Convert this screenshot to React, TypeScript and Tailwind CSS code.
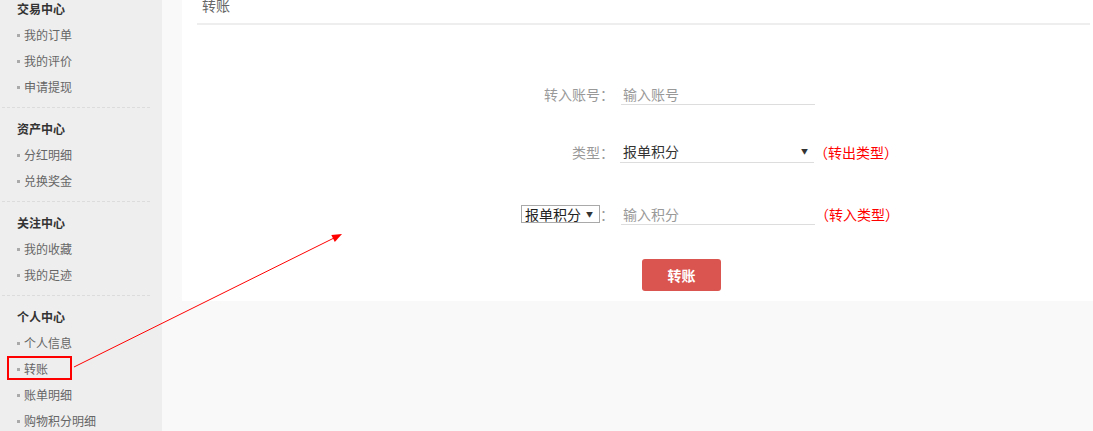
const sections = [
  { title: '交易中心', items: ['我的订单', '我的评价', '申请提现'] },
  { title: '资产中心', items: ['分红明细', '兑换奖金'] },
  { title: '关注中心', items: ['我的收藏', '我的足迹'] },
  { title: '个人中心', items: ['个人信息', '转账', '账单明细', '购物积分明细'] },
];

export default function App() {
  return (
    <div className="relative h-[431px] overflow-hidden bg-[#f9f9f9] font-['Noto_Sans_CJK_SC','Noto_Sans',sans-serif]">
      <div className="-mt-[12px] flex items-start">
        <aside className="min-h-[460px] w-[162px] shrink-0 bg-[#eeeeee]">
          {sections.map((s, i) => (
            <div key={s.title}>
              <div className="py-[7px]">
                <div className="flex h-[27px] items-center pl-[17px] text-[12px] font-bold text-[#333]">
                  {s.title}
                </div>
                {s.items.map((it) => (
                  <div
                    key={it}
                    className="flex h-[26px] items-center gap-[4px] pl-[17px] text-[12px] text-[#666]"
                  >
                    <span className="h-[3px] w-[3px] bg-[#aaa]" />
                    {it}
                  </div>
                ))}
              </div>
              {i < sections.length - 1 && (
                <div className="mx-[2px] h-px w-[150px] bg-[repeating-linear-gradient(to_right,#dcdcdc_0,#dcdcdc_3px,transparent_3px,transparent_5px)]" />
              )}
            </div>
          ))}
        </aside>

        <main className="ml-[20px] flex-1 bg-white pb-[10px] pl-[15px] pr-[3px]">
          <div className="flex h-[37px] items-center border-b-2 border-[#eeeeee] pl-[5px] text-[14px] text-[#666]">
            转账
          </div>

          <div className="mt-[58px] flex h-[22px] items-center">
            <div className="w-[417px] text-right text-[14px] leading-[22px] text-[#999]">转入账号：</div>
            <input
              className="ml-[7px] h-[22px] w-[194px] border-b border-[#dddddd] pl-[2px] text-[14px] text-[#333] outline-none placeholder:text-[#999]"
              placeholder="输入账号"
            />
          </div>

          <div className="mt-[36px] flex h-[22px] items-center">
            <div className="w-[417px] text-right text-[14px] leading-[22px] text-[#999]">类型：</div>
            <div className="relative ml-[6px] h-[22px] w-[194px] border-b border-[#dddddd]">
              <select className="block h-[21px] w-full appearance-none bg-transparent pl-[3px] text-[14px] leading-[21px] text-[#333] outline-none">
                <option>报单积分</option>
                <option>购物积分</option>
              </select>
              <span className="pointer-events-none absolute right-[6px] top-[4px] text-[7px] leading-[12px] text-[#333]">▼</span>
            </div>
            <span className="text-[14px] leading-[22px] text-[#ff0000]">（转出类型）</span>
          </div>

          <div className="mt-[40px] flex h-[22px] items-center">
            <div className="flex w-[417px] items-center justify-end text-[14px] leading-[22px] text-[#999]">
              <div className="relative flex h-[18px] w-[79px] items-center border border-[#a9a9a9] bg-white">
                <select className="block h-[16px] w-full appearance-none bg-transparent pl-[3px] text-[14px] leading-[16px] text-[#222] outline-none">
                  <option>报单积分</option>
                  <option>购物积分</option>
                </select>
                <span className="pointer-events-none absolute right-[6px] top-[2px] text-[7px] leading-[12px] text-[#333]">▼</span>
              </div>
              <span>：</span>
            </div>
            <input
              className="ml-[7px] h-[22px] w-[194px] border-b border-[#dddddd] pl-[2px] text-[14px] text-[#333] outline-none placeholder:text-[#999]"
              placeholder="输入积分"
            />
            <span className="text-[14px] leading-[22px] text-[#ff0000]">（转入类型）</span>
          </div>

          <div className="mt-[34px] flex">
            <button className="ml-[445px] h-[32px] w-[79px] rounded-[3px] bg-[#da5550] text-[14px] font-bold text-white">
              转账
            </button>
          </div>
        </main>
      </div>

      <svg className="pointer-events-none absolute left-0 top-0" width="1093" height="431">
        <rect x="8" y="357" width="63" height="22" fill="none" stroke="#ff0000" strokeWidth="2" />
        <line x1="74" y1="367" x2="334" y2="238" stroke="#ff0000" strokeWidth="1" />
        <polygon points="342,234 334.8,242 331.3,234.9" fill="#ff0000" />
      </svg>
    </div>
  );
}
